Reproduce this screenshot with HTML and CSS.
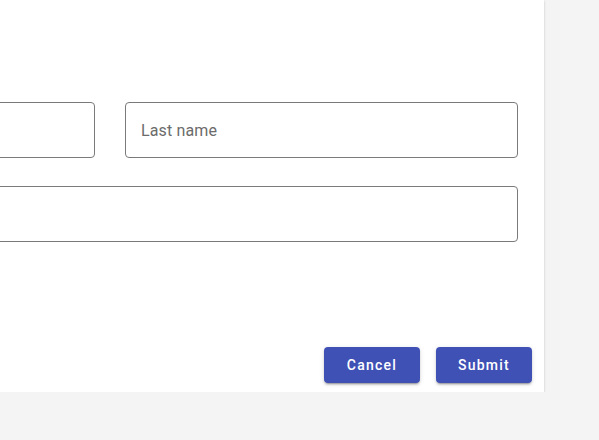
FILE: index.html
```html
<!DOCTYPE html>
<html>
<head>
<meta charset="utf-8">
<link rel="stylesheet" href="styles.css">
</head>
<body>
<div class="card">
  <form class="form">
    <div class="row two">
      <div class="field"><span class="label">First name</span></div>
      <div class="field"><span class="label">Last name</span></div>
    </div>
    <div class="row">
      <div class="field"><span class="label">Email</span></div>
    </div>
  </form>
  <div class="actions">
    <button type="button" class="btn">Cancel</button>
    <button type="button" class="btn">Submit</button>
  </div>
</div>
</body>
</html>
```
FILE: styles.css
```css
html, body {
  margin: 0;
  padding: 0;
  background: #f4f4f4;
  overflow: hidden;
  font-family: Roboto, "Noto Sans", sans-serif;
}
.card {
  width: 868px;
  height: 392px;
  margin-left: -324px;
  background: #fff;
  box-shadow: 0 2px 1px -1px rgba(0,0,0,0.2), 0 1px 1px 0 rgba(0,0,0,0.14), 0 1px 3px 0 rgba(0,0,0,0.12);
  display: flex;
  flex-direction: column;
  box-sizing: border-box;
  padding: 102px 12px 9px 26px;
}
.form {
  display: flex;
  flex-direction: column;
  gap: 28px;
  margin: 0 14px 0 0;
}
.row {
  display: grid;
  grid-template-columns: 1fr;
}
.row.two {
  grid-template-columns: 1fr 1fr;
  column-gap: 30px;
}
.field {
  height: 56px;
  box-sizing: border-box;
  border: 1px solid #7a7a7a;
  border-radius: 4px;
  display: flex;
  align-items: center;
  padding: 0 15px;
}
.label {
  font-size: 16px;
  color: #6b6b6b;
  letter-spacing: 0.15px;
}
.row:nth-child(2) .label { visibility: hidden; }
.row.two .field:first-child .label { visibility: hidden; }
.actions {
  margin-top: auto;
  display: flex;
  justify-content: flex-end;
  gap: 16px;
}
.btn {
  width: 96px;
  height: 36px;
  border: none;
  border-radius: 4px;
  background: #3f51b5;
  color: #fff;
  font-family: Roboto, sans-serif;
  font-size: 14px;
  font-weight: 500;
  letter-spacing: 1.25px;
  box-shadow: 0 3px 1px -2px rgba(0,0,0,0.2), 0 2px 2px 0 rgba(0,0,0,0.14), 0 1px 5px 0 rgba(0,0,0,0.12);
  padding: 0;
}
```
